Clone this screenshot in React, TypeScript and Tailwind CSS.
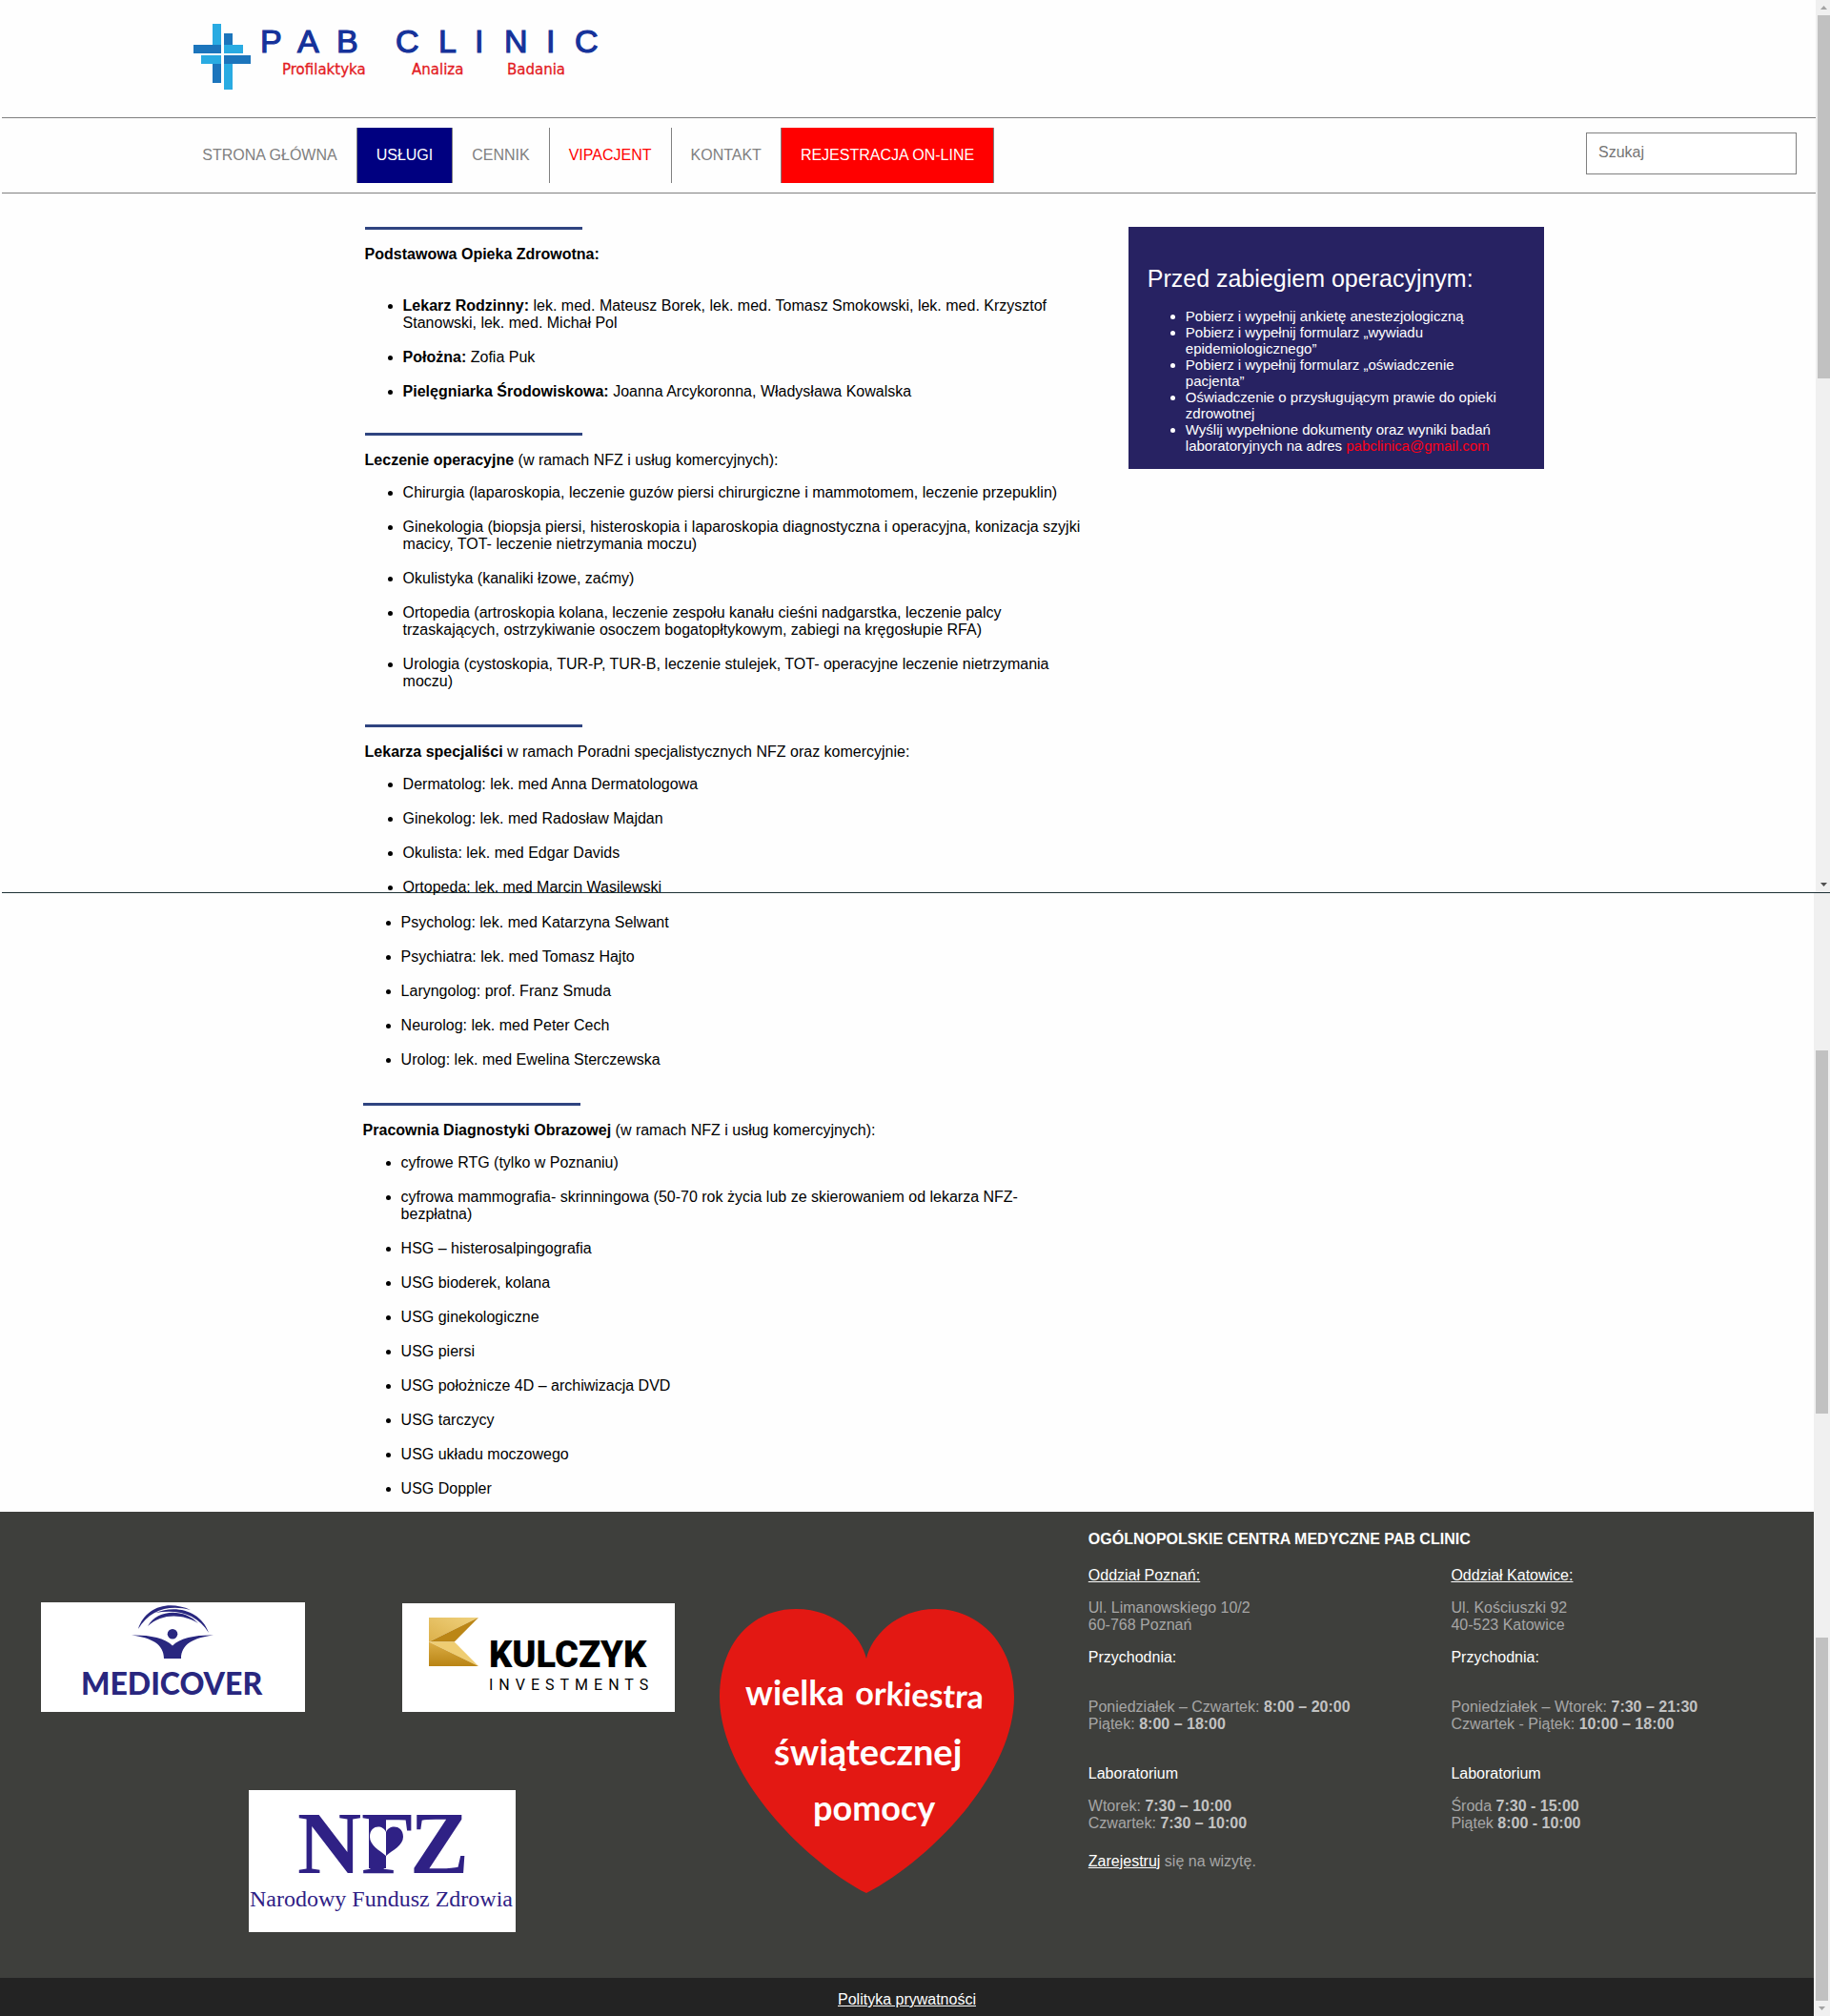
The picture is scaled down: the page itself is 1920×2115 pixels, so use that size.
import type { ReactNode } from "react";

type Entry = { label?: string; text: string };

const primaryCare: Entry[] = [
  { label: "Lekarz Rodzinny:", text: "lek. med. Mateusz Borek, lek. med. Tomasz Smokowski, lek. med. Krzysztof Stanowski, lek. med. Michał Pol" },
  { label: "Położna:", text: "Zofia Puk" },
  { label: "Pielęgniarka Środowiskowa:", text: "Joanna Arcykoronna, Władysława Kowalska" },
];

const surgery: Entry[] = [
  { text: "Chirurgia (laparoskopia, leczenie guzów piersi chirurgiczne i mammotomem, leczenie przepuklin)" },
  { text: "Ginekologia (biopsja piersi, histeroskopia i laparoskopia diagnostyczna i operacyjna, konizacja szyjki macicy, TOT- leczenie nietrzymania moczu)" },
  { text: "Okulistyka (kanaliki łzowe, zaćmy)" },
  { text: "Ortopedia (artroskopia kolana, leczenie zespołu kanału cieśni nadgarstka, leczenie palcy trzaskających, ostrzykiwanie osoczem bogatopłtykowym, zabiegi na kręgosłupie RFA)" },
  { text: "Urologia (cystoskopia, TUR-P, TUR-B, leczenie stulejek, TOT- operacyjne leczenie nietrzymania moczu)" },
];

const specialistsTop: Entry[] = [
  { text: "Dermatolog: lek. med Anna Dermatologowa" },
  { text: "Ginekolog: lek. med Radosław Majdan" },
  { text: "Okulista: lek. med Edgar Davids" },
  { text: "Ortopeda: lek. med Marcin Wasilewski" },
];

const specialistsRest: Entry[] = [
  { text: "Psycholog: lek. med Katarzyna Selwant" },
  { text: "Psychiatra: lek. med Tomasz Hajto" },
  { text: "Laryngolog: prof. Franz Smuda" },
  { text: "Neurolog: lek. med Peter Cech" },
  { text: "Urolog: lek. med Ewelina Sterczewska" },
];

const imaging: Entry[] = [
  { text: "cyfrowe RTG (tylko w Poznaniu)" },
  { text: "cyfrowa mammografia- skrinningowa (50-70 rok życia lub ze skierowaniem od lekarza NFZ- bezpłatna)" },
  { text: "HSG – histerosalpingografia" },
  { text: "USG bioderek, kolana" },
  { text: "USG ginekologiczne" },
  { text: "USG piersi" },
  { text: "USG położnicze 4D – archiwizacja DVD" },
  { text: "USG tarczycy" },
  { text: "USG układu moczowego" },
  { text: "USG Doppler" },
];

function ServiceList({ items }: { items: Entry[] }) {
  return (
    <ul className="flex list-disc flex-col gap-[18px] pl-10">
      {items.map((item) => (
        <li key={item.text}>
          {item.label && <strong>{item.label} </strong>}
          {item.text}
        </li>
      ))}
    </ul>
  );
}

function Rule() {
  return <hr className="h-[3px] w-[30%] border-0 bg-[#2f4480]" />;
}

function Heading({ title, note }: { title: string; note?: string }) {
  return (
    <h2 className="mt-[17px] mb-4">
      <strong>{title}</strong>
      {note && " " + note}
    </h2>
  );
}

function ClinicLogo() {
  return (
    <svg width="450" height="108" viewBox="0 0 450 108" role="img" aria-label="PAB Clinic" className="block">
      <g fill="#29abe2">
        <rect x="31" y="25" width="9" height="22" />
        <rect x="43" y="47" width="20" height="9" />
        <rect x="19" y="58" width="21" height="9" />
        <rect x="43" y="67" width="9" height="27" />
      </g>
      <g fill="#1c75bc">
        <rect x="43" y="35" width="9" height="12" />
        <rect x="11" y="47" width="29" height="9" />
        <rect x="43" y="58" width="28" height="9" />
        <rect x="31" y="67" width="9" height="20" />
      </g>
      <text
        x="81 120 161 190 223 268 306 337 381 411"
        y="55"
        fill="#15329a"
        stroke="#15329a"
        strokeWidth="1.2"
        fontFamily="'Liberation Sans', Arial, sans-serif"
        fontSize="34"
      >
        PAB CLINIC
      </text>
      <g fill="#e31b23" stroke="#e31b23" strokeWidth="0.3" fontFamily="'DejaVu Sans', Verdana, sans-serif" fontSize="15">
        <text x="104" y="78">Profilaktyka</text>
        <text x="240" y="78">Analiza</text>
        <text x="340" y="78">Badania</text>
      </g>
    </svg>
  );
}

function NavItem({ children, tone = "text-[#808080]" }: { children: ReactNode; tone?: string }) {
  return (
    <li className={"border-r border-[#808080] " + tone}>
      <a href="#" className="block px-5 py-5 whitespace-nowrap">
        {children}
      </a>
    </li>
  );
}

function MedicoverLogo() {
  return (
    <svg width="277" height="115" viewBox="0 0 277 115" role="img" aria-label="Medicover" className="shrink-0 bg-white">
      <g fill="#29277f">
        <path d="M102 28C109 6 132-3 157 8C134 2 114 8 102 28Z" />
        <path d="M120 11C142 2 168 9 176 32C164 13 145 7 120 11Z" />
        <path d="M112 25C122 7 150 6 165 22C149 12 127 11 112 25Z" />
        <circle cx="138" cy="33.3" r="5.3" />
        <path d="M95 34.5C112 34 130 37 138 45.5C146 37 164 34 181 34.5C160 37 147 44 147 59H129C129 44 116 37 95 34.5Z" />
        <text x="42" y="97" fontFamily="Lato, sans-serif" fontWeight="900" fontSize="32">
          MEDICOVER
        </text>
      </g>
    </svg>
  );
}

function KulczykLogo() {
  return (
    <svg width="286" height="114" viewBox="0 0 286 114" role="img" aria-label="Kulczyk Investments" className="shrink-0 bg-white">
      <defs>
        <linearGradient id="goldTop" x1="0" y1="1" x2="1" y2="0">
          <stop offset="0" stopColor="#dcb04a" />
          <stop offset="1" stopColor="#f0d27e" />
        </linearGradient>
        <linearGradient id="goldBottom" x1="0" y1="0" x2="0" y2="1">
          <stop offset="0" stopColor="#dcae46" />
          <stop offset="1" stopColor="#b98414" />
        </linearGradient>
      </defs>
      <path d="M28 15H80L28 40.5Z" fill="url(#goldTop)" />
      <path d="M80 15L54.7 40.5H28Z" fill="#bb8616" />
      <path d="M28 40.5H54.7L80 66Z" fill="#efcd72" />
      <path d="M28 40.5L80 66H28Z" fill="url(#goldBottom)" />
      <text x="91" y="67" fontFamily="Roboto, sans-serif" fontWeight="900" fontSize="38">
        KULCZYK
      </text>
      <text x="91" y="91" fontFamily="Roboto, sans-serif" fontSize="16" letterSpacing="6">
        INVESTMENTS
      </text>
    </svg>
  );
}

function NfzLogo() {
  return (
    <svg width="280" height="149" viewBox="0 0 280 149" role="img" aria-label="Narodowy Fundusz Zdrowia" className="block bg-white">
      <g fill="#2f2185" fontFamily="'Liberation Serif', serif">
        <text x="51 118 169" y="87" fontSize="93" fontWeight="700">
          NFZ
        </text>
        <rect x="143" y="46" width="25" height="27" fill="#fff" />
        <rect x="126" y="30" width="18" height="52" />
        <path d="M144 44C147 36 162 36 162 49C162 58 151 63 144 69Z" />
        <path d="M144 44C141 36 127 36 127 49C127 58 137 63 144 69Z" fill="#fff" />
        <text x="1" y="122" fontSize="24">
          Narodowy Fundusz Zdrowia
        </text>
      </g>
    </svg>
  );
}

function OrchestraHeart() {
  return (
    <svg width="309" height="298" viewBox="0 0 309 298" role="img" aria-label="Wielka Orkiestra Świątecznej Pomocy" className="shrink-0">
      <path
        d="M154 52C149 30 124 0 80 0C35 0 0 35 0 92C0 175 90 265 154 298C218 265 309 175 309 92C309 35 270 0 227 0C184 0 159 30 154 52Z"
        fill="#e31813"
      />
      <g fill="#fff" fontFamily="Lato, sans-serif" fontWeight="700">
        <text x="27" y="101" fontSize="36">wielka</text>
        <text x="142" y="100" fontSize="34" transform="rotate(2 142 100)">orkiestra</text>
        <text x="57" y="164" fontSize="38">świątecznej</text>
        <text x="98" y="222" fontSize="36">pomocy</text>
      </g>
    </svg>
  );
}

function Hours({ rows }: { rows: [string, string][] }) {
  return (
    <p>
      {rows.map(([day, time]) => (
        <span key={day} className="block">
          {day} <strong className="text-[#c2c2c2]">{time}</strong>
        </span>
      ))}
    </p>
  );
}

type BranchProps = {
  name: string;
  street: string;
  city: string;
  clinic: [string, string][];
  lab: [string, string][];
};

function Branch({ name, street, city, clinic, lab }: BranchProps) {
  return (
    <section className="w-1/2">
      <h3 className="mb-4 text-white underline">{name}</h3>
      <address className="mb-4 not-italic">
        {street}
        <br />
        {city}
      </address>
      <h4 className="mb-[34px] text-white">Przychodnia:</h4>
      <Hours rows={clinic} />
      <h4 className="mt-[34px] mb-4 text-white">Laboratorium</h4>
      <Hours rows={lab} />
    </section>
  );
}

function Arrow({ down = false, color }: { down?: boolean; color: string }) {
  return (
    <svg width="13" height="16" viewBox="0 0 13 16" className="block shrink-0" aria-hidden="true">
      <path d={down ? "M3 6H10L6.5 10Z" : "M3 10H10L6.5 6Z"} fill={color} />
    </svg>
  );
}

function Thumb() {
  return <div className="h-[381px] w-[13px] shrink-0 bg-[#c1c1c1]" />;
}

export default function App() {
  return (
    <div className="bg-[#fefefe] font-['Liberation_Sans',Arial,sans-serif] text-[16px] leading-[18px] text-black">
      <div className="ml-0.5 flex border-b border-[#1d3035]">
        <div className="min-w-0 flex-1">
          <header>
            <div className="h-[123px] pl-[10%]">
              <ClinicLogo />
            </div>
            <div className="flex items-start justify-between border-y border-[#808080] py-[10px] pr-5 pl-[10%]">
              <nav>
                <ul className="flex">
                  <NavItem>STRONA GŁÓWNA</NavItem>
                  <NavItem tone="bg-[#000080] text-white">USŁUGI</NavItem>
                  <NavItem>CENNIK</NavItem>
                  <NavItem tone="text-[#ff0000]">VIPACJENT</NavItem>
                  <NavItem>KONTAKT</NavItem>
                  <NavItem tone="bg-[#ff0000] text-white">REJESTRACJA ON-LINE</NavItem>
                </ul>
              </nav>
              <input
                type="search"
                aria-label="Szukaj"
                placeholder="Szukaj"
                className="mt-[5px] h-11 w-[221px] border border-[#808080] bg-white px-3 pb-0.5 placeholder:text-[#757575]"
              />
            </div>
          </header>

          <main className="flex items-start pt-[35px] pl-[20%]">
            <article className="w-1/2">
              <Rule />
              <div className="mb-9">
                <Heading title="Podstawowa Opieka Zdrowotna:" />
              </div>
              <ServiceList items={primaryCare} />
              <div className="h-[34px]" />
              <Rule />
              <Heading title="Leczenie operacyjne" note="(w ramach NFZ i usług komercyjnych):" />
              <ServiceList items={surgery} />
              <div className="h-9" />
              <Rule />
              <Heading title="Lekarza specjaliści" note="w ramach Poradni specjalistycznych NFZ oraz komercyjnie:" />
              <div className="-mb-1">
                <ServiceList items={specialistsTop} />
              </div>
            </article>

            <aside className="ml-10 w-[436px] bg-[#272262] pt-10 pr-10 pb-4 pl-5 text-white">
              <h2 className="text-[25px] leading-[28px]">Przed zabiegiem operacyjnym:</h2>
              <ul className="mt-[17px] list-disc pl-10 text-[15px] leading-[17px]">
                <li>Pobierz i wypełnij ankietę anestezjologiczną</li>
                <li>Pobierz i wypełnij formularz „wywiadu epidemiologicznego”</li>
                <li>Pobierz i wypełnij formularz „oświadczenie pacjenta”</li>
                <li>Oświadczenie o przysługującym prawie do opieki zdrowotnej</li>
                <li>
                  Wyślij wypełnione dokumenty oraz wyniki badań laboratoryjnych na adres{" "}
                  <a href="mailto:pabclinica@gmail.com" className="text-[#ff0016]">
                    pabclinica@gmail.com
                  </a>
                </li>
              </ul>
            </aside>
          </main>
        </div>
        <div className="flex w-[15px] flex-col bg-[#f0f0f0] pl-0.5">
          <Arrow color="#a3a3a3" />
          <Thumb />
          <div className="flex-1" />
          <Arrow down color="#505050" />
        </div>
      </div>

      <div className="flex">
        <div className="min-w-0 flex-1">
          <article className="ml-[20%] w-[40%] pt-[22px] pb-[15px]">
            <ServiceList items={specialistsRest} />
            <div className="h-9" />
            <Rule />
            <Heading title="Pracownia Diagnostyki Obrazowej" note="(w ramach NFZ i usług komercyjnych):" />
            <ServiceList items={imaging} />
          </article>

          <footer>
            <div className="flex bg-[#3e3f3c] text-[#a6a6a6]">
              <div className="flex w-[60%] items-start gap-[47px] pt-[95px] pb-12 pl-[43px]">
                <div>
                  <div className="flex items-end gap-[102px]">
                    <MedicoverLogo />
                    <KulczykLogo />
                  </div>
                  <div className="mt-[82px] ml-[218px]">
                    <NfzLogo />
                  </div>
                </div>
                <div className="pt-[7px]">
                  <OrchestraHeart />
                </div>
              </div>
              <div className="w-[40%] pt-5">
                <h2 className="mb-5 font-bold text-white">OGÓLNOPOLSKIE CENTRA MEDYCZNE PAB CLINIC</h2>
                <div className="flex">
                  <Branch
                    name="Oddział Poznań:"
                    street="Ul. Limanowskiego 10/2"
                    city="60-768 Poznań"
                    clinic={[["Poniedziałek – Czwartek:", "8:00 – 20:00"], ["Piątek:", "8:00 – 18:00"]]}
                    lab={[["Wtorek:", "7:30 – 10:00"], ["Czwartek:", "7:30 – 10:00"]]}
                  />
                  <Branch
                    name="Oddział Katowice:"
                    street="Ul. Kościuszki 92"
                    city="40-523 Katowice"
                    clinic={[["Poniedziałek – Wtorek:", "7:30 – 21:30"], ["Czwartek - Piątek:", "10:00 – 18:00"]]}
                    lab={[["Środa", "7:30 - 15:00"], ["Piątek", "8:00 - 10:00"]]}
                  />
                </div>
                <p className="mt-[22px]">
                  <a href="#" className="text-white underline">
                    Zarejestruj
                  </a>{" "}
                  się na wizytę.
                </p>
              </div>
            </div>
            <div className="bg-[#232323] pt-[14px] pb-2 text-center">
              <a href="#" className="text-white underline">
                Polityka prywatności
              </a>
            </div>
          </footer>
        </div>
        <div className="flex w-[17px] flex-col bg-[#f0f0f0] px-0.5">
          <div className="h-[165px]" />
          <Thumb />
          <div className="flex-1" />
          <Thumb />
          <Arrow down color="#a3a3a3" />
        </div>
      </div>
    </div>
  );
}
